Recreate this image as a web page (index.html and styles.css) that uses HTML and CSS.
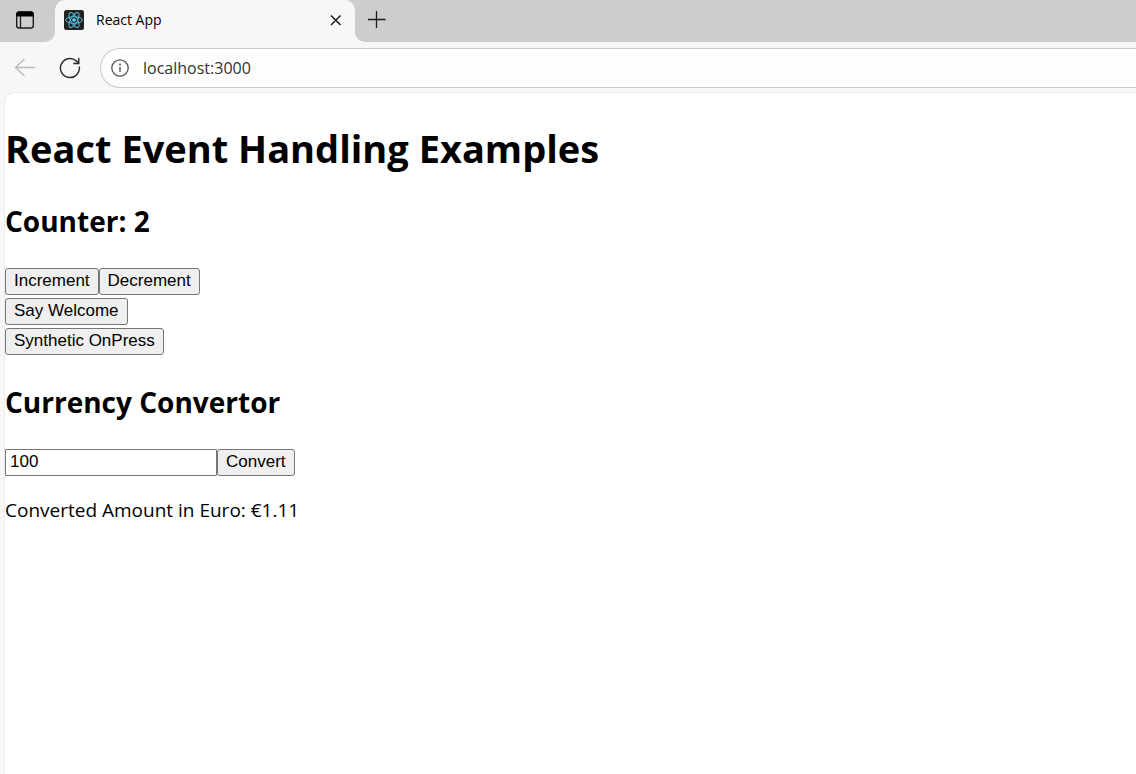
FILE: index.html
```html
<!DOCTYPE html>
<html lang="en">
<head>
<meta charset="utf-8">
<title>React App</title>
<link rel="stylesheet" href="styles.css">
</head>
<body>
<header class="browser">
  <div class="tab-strip">
    <div class="strip-start">
      <button class="icon-button" aria-label="Tab actions">
        <svg width="20" height="20" viewBox="0 0 20 20"><rect x="1.7" y="2" width="16.6" height="16" rx="2.6" fill="none" stroke="#1b1b1b" stroke-width="1.4"/><path d="M1.5 6.5V4.4A2.8 2.8 0 0 1 4.3 1.6h11.4a2.8 2.8 0 0 1 2.8 2.8v2.1z" fill="#000"/><path d="M5.5 6v12" stroke="#1b1b1b" stroke-width="1.3"/></svg>
      </button>
    </div>
    <div class="tab">
      <svg class="favicon" width="20" height="20" viewBox="0 0 20 20"><rect width="20" height="20" rx="2.5" fill="#222"/><g fill="none" stroke="#53bfdc" stroke-width="1"><ellipse cx="10" cy="10" rx="8.4" ry="3.3"/><ellipse cx="10" cy="10" rx="8.4" ry="3.3" transform="rotate(60 10 10)"/><ellipse cx="10" cy="10" rx="8.4" ry="3.3" transform="rotate(120 10 10)"/></g><circle cx="10" cy="10" r="1.8" fill="#61dafb"/></svg>
      <span class="tab-title">React App</span>
      <button class="icon-button" aria-label="Close tab">
        <svg width="12" height="12" viewBox="0 0 12 12"><path d="M1 1.500l9.500 9.500M10.500 1.500l-9.500 9.500" stroke="#111" stroke-width="1.4"/></svg>
      </button>
    </div>
    <div class="strip-end">
      <button class="icon-button" aria-label="New tab">
        <svg width="18" height="18" viewBox="0 0 18 18"><path d="M8.500 0v17M0 8.500h17.500" stroke="#1b1b1b" stroke-width="1.3"/></svg>
      </button>
    </div>
  </div>
  <div class="toolbar">
    <button class="icon-button" aria-label="Back">
      <svg width="22" height="20" viewBox="0 0 22 20"><path d="M10.500 1L1.500 9.500l9 8.500M1.500 9.500h19.500" fill="none" stroke="#b9b9b9" stroke-width="1.3"/></svg>
    </button>
    <button class="icon-button reload" aria-label="Reload">
      <svg width="22" height="22" viewBox="0 0 22 22"><path d="M20.300 9.500A9.500 9.500 0 1 1 17.200 3.900L19.500 6M19.800 1v5.500h-5.500" fill="none" stroke="#2b2b2b" stroke-width="1.4"/></svg>
    </button>
    <div class="address">
      <svg width="18" height="18" viewBox="0 0 18 18"><circle cx="9" cy="9" r="8.200" fill="none" stroke="#555" stroke-width="1.300"/><path d="M9 8v5" stroke="#555" stroke-width="1.400"/><circle cx="9" cy="5.500" r="1" fill="#555"/></svg>
      <input class="url" type="text" aria-label="Address" value="localhost:3000">
    </div>
  </div>
</header>
<main class="page">
  <h1>React Event Handling Examples</h1>
  <h2>Counter: 2</h2>
  <div class="actions">
    <div class="row"><button class="button">Increment</button><button class="button">Decrement</button></div>
    <div class="row"><button class="button">Say Welcome</button></div>
    <div class="row"><button class="button">Synthetic OnPress</button></div>
  </div>
  <h2>Currency Convertor</h2>
  <div class="row"><input class="amount" type="text" aria-label="Amount" value="100"><button class="button">Convert</button></div>
  <p>Converted Amount in Euro: €1.11</p>
</main>
</body>
</html>
```
FILE: styles.css
```css
* { box-sizing: border-box; }

body {
  margin: 0;
  min-height: 100vh;
  display: flex;
  flex-direction: column;
  background: #f7f7f7;
  color: #000;
  font-family: "Open Sans", "Noto Sans", sans-serif;
}

.icon-button {
  display: flex;
  padding: 0;
  border: 0;
  background: none;
}

.tab-strip {
  display: flex;
  height: 42px;
  background: linear-gradient(#cdcdcd 50%, #f7f7f7 50%);
}

.strip-start,
.strip-end {
  display: flex;
  align-items: center;
  background: #cdcdcd;
}

.strip-start {
  width: 55px;
  padding: 0 15px 2px;
  border-bottom-right-radius: 10px;
}

.strip-end {
  flex: 1;
  padding: 0 13px 3px;
  border-bottom-left-radius: 10px;
}

.tab {
  display: flex;
  align-items: center;
  gap: 12px;
  width: 300px;
  padding: 0 13px 2px 9px;
  background: #f7f7f7;
  border-radius: 10px 10px 0 0;
}

.tab-title {
  flex: 1;
  font-size: 14px;
  line-height: 20px;
}

.toolbar {
  display: flex;
  align-items: center;
  padding: 6px 0 4px 14px;
}

.reload { margin: 0 19px 0 23px; }

.address {
  display: flex;
  align-items: center;
  flex: 1;
  gap: 14px;
  height: 40px;
  padding-left: 10px;
  border: 1px solid #cbcbcb;
  border-right: 0;
  border-radius: 20px 0 0 20px;
  background: #fdfdfd;
}

.url {
  flex: 1;
  min-width: 0;
  padding: 0;
  border: 0;
  background: none;
  color: #333;
  font: 16px/24px "Open Sans", "Noto Sans", sans-serif;
}

.page {
  flex: 1;
  margin-left: 4px;
  border: 1px solid #ececec;
  border-width: 1px 0 0 1px;
  border-top-left-radius: 10px;
  background: #fff;
}

h1,
h2,
p { margin: 0; }

h1 {
  padding: 28px 0 20px;
  font-size: 38px;
  line-height: 54px;
}

h2 {
  padding: 6px 0 27px;
  font-size: 28px;
  line-height: 40px;
}

.actions {
  display: grid;
  gap: 3px;
  padding-bottom: 21px;
}

.row { display: flex; }

.button,
.amount {
  height: 27px;
  border: 1px solid #767676;
  font: 17px/20px "Liberation Sans", Arial, sans-serif;
  color: #000;
}

.button {
  padding: 0 8px 2px;
  border-radius: 3px;
  background: #efefef;
}

.amount {
  width: 212px;
  padding: 0 4px 2px;
  border-radius: 1px;
  background: #fff;
}

p {
  padding-top: 20px;
  font-size: 19px;
  line-height: 28px;
}
```
